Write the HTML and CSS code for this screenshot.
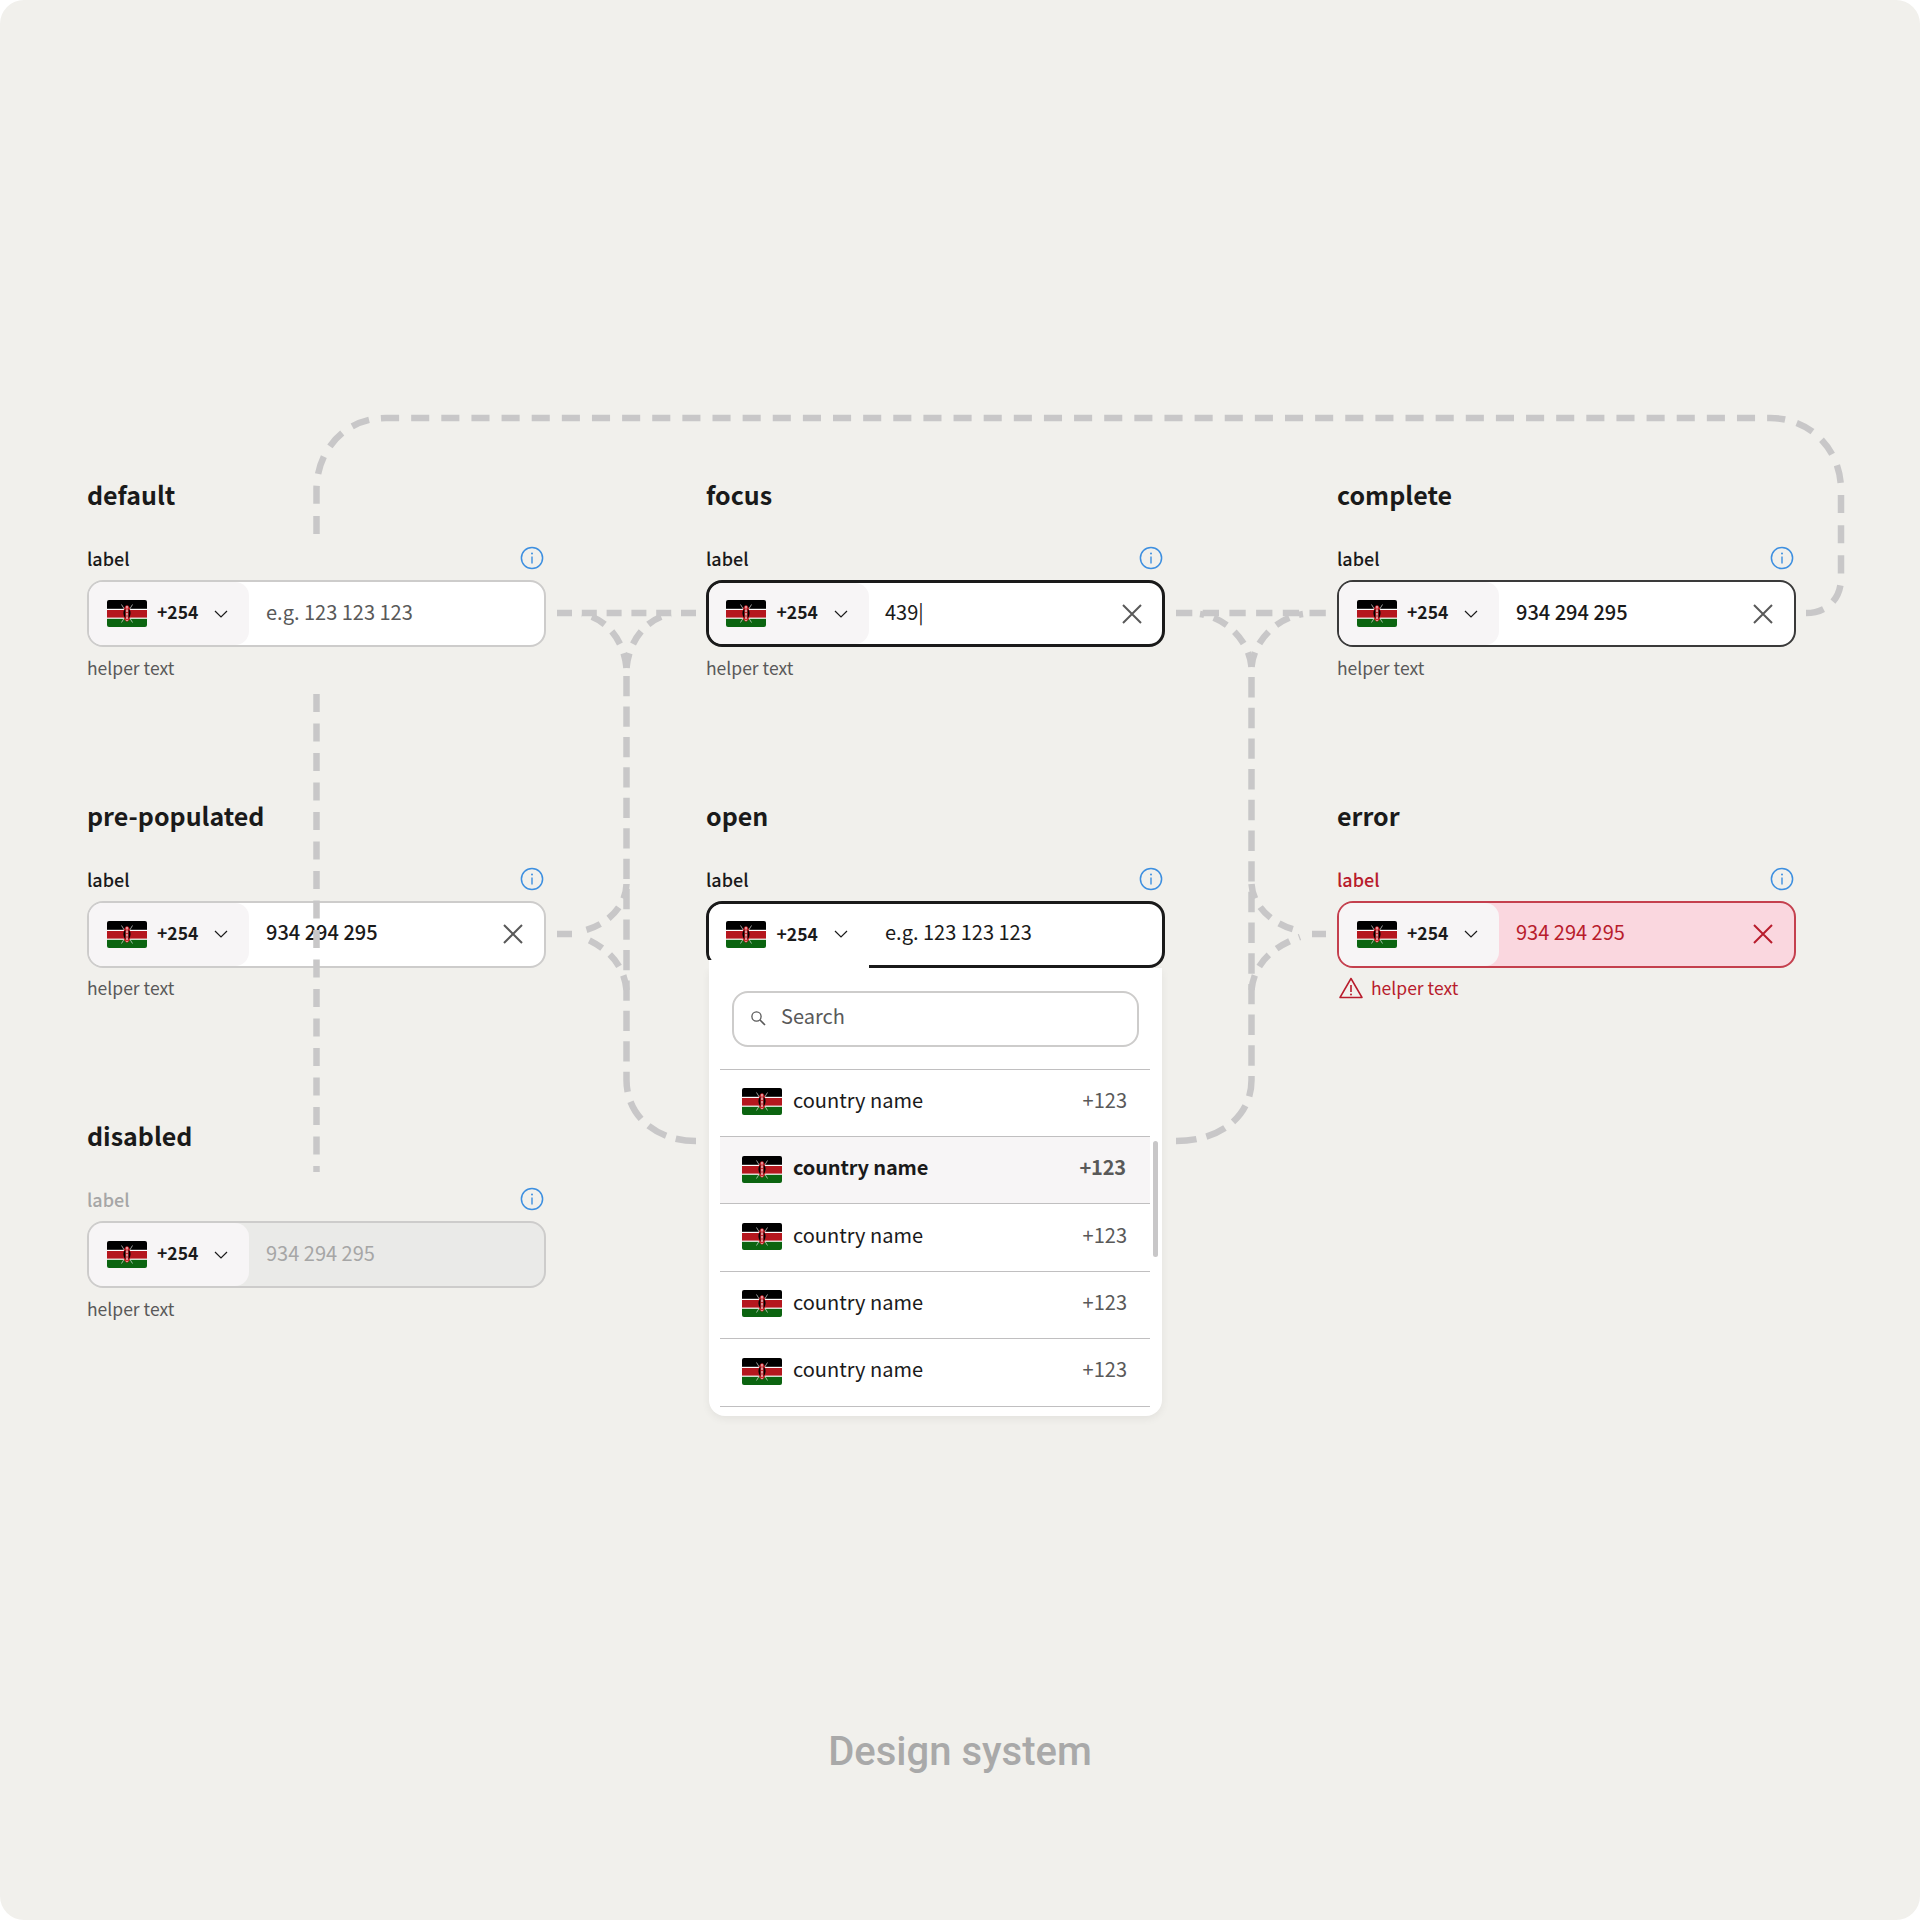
FILE: index.html
```html
<!DOCTYPE html>
<html lang="en">
<head>
    <meta charset="UTF-8">
    <meta name="viewport" content="width=device-width, initial-scale=1.0">
    <title>Phone input states</title>
    <link rel="stylesheet" href="styles.css">
</head>
<body>
    <svg class="defs" width="0" height="0">
        <symbol id="flag" viewBox="0 0 40 27">
            <clipPath id="flag-clip"><rect width="40" height="27" rx="2"/></clipPath>
            <g clip-path="url(#flag-clip)">
                <rect width="40" height="27" fill="#fff"/>
                <rect width="40" height="8.8" fill="#000"/>
                <rect y="10" width="40" height="7.6" fill="#b5171e"/>
                <rect y="18.8" width="40" height="8.2" fill="#0b6410"/>
            </g>
            <path d="M14.5 4.5 25.5 22.5M25.5 4.5 14.5 22.5" stroke="#ddd" stroke-width=".7"/>
            <ellipse cx="20" cy="13.5" rx="3.6" ry="8.2" fill="#c9252c"/>
            <path d="M16.4 13.5a3.6 6 0 0 1 2-5v10a3.6 6 0 0 1-2-5zM23.6 13.5a3.6 6 0 0 0-2-5v10a3.6 6 0 0 0 2-5z" fill="#000"/>
            <path d="M20 6v15" stroke="#fff" stroke-width="1" stroke-dasharray="2.5 1"/>
        </symbol>
        <symbol id="chevron" viewBox="0 0 14 8">
            <path d="M1 1l6 6 6-6" fill="none" stroke="currentColor" stroke-width="1.2"/>
        </symbol>
        <symbol id="info" viewBox="0 0 24 24">
            <circle cx="12" cy="12" r="10.6" fill="none" stroke="currentColor" stroke-width="1.5"/>
            <path d="M12 10.5v7" stroke="currentColor" stroke-width="1.4"/>
            <circle cx="12" cy="7.4" r="1" fill="currentColor"/>
        </symbol>
        <symbol id="clear" viewBox="0 0 20 20">
            <path d="M1 1l18 18M19 1 1 19" fill="none" stroke="currentColor" stroke-width="2"/>
        </symbol>
    </svg>

    <div class="canvas">
        <div class="states">
            <!-- first row -->
            <section class="state">
                <h2>default</h2>
                <div class="label-row"><span class="label">label</span><svg class="info"><use href="#info"/></svg></div>
                <div class="field">
                    <div class="trigger"><svg class="flag"><use href="#flag"/></svg><b class="code">+254</b><svg class="chevron"><use href="#chevron"/></svg></div>
                    <div class="value placeholder">e.g. 123 123 123</div>
                </div>
                <p class="helper">helper text</p>
            </section>

            <section class="state">
                <h2>focus</h2>
                <div class="label-row"><span class="label">label</span><svg class="info"><use href="#info"/></svg></div>
                <div class="field field-strong">
                    <div class="trigger"><svg class="flag"><use href="#flag"/></svg><b class="code">+254</b><svg class="chevron"><use href="#chevron"/></svg></div>
                    <div class="value placeholder">439|</div>
                    <svg class="clear"><use href="#clear"/></svg>
                </div>
                <p class="helper">helper text</p>
            </section>

            <section class="state">
                <h2>complete</h2>
                <div class="label-row"><span class="label">label</span><svg class="info"><use href="#info"/></svg></div>
                <div class="field field-complete">
                    <div class="trigger"><svg class="flag"><use href="#flag"/></svg><b class="code">+254</b><svg class="chevron"><use href="#chevron"/></svg></div>
                    <div class="value">934 294 295</div>
                    <svg class="clear"><use href="#clear"/></svg>
                </div>
                <p class="helper">helper text</p>
            </section>

            <!-- second row -->
            <section class="state">
                <h2>pre-populated</h2>
                <div class="label-row"><span class="label">label</span><svg class="info"><use href="#info"/></svg></div>
                <div class="field">
                    <div class="trigger"><svg class="flag"><use href="#flag"/></svg><b class="code">+254</b><svg class="chevron"><use href="#chevron"/></svg></div>
                    <div class="value">934 294 295</div>
                    <svg class="clear"><use href="#clear"/></svg>
                </div>
                <p class="helper">helper text</p>
            </section>

            <section class="state">
                <h2>open</h2>
                <div class="label-row"><span class="label">label</span><svg class="info"><use href="#info"/></svg></div>
                <div class="field field-strong field-open">
                    <div class="trigger"><svg class="flag"><use href="#flag"/></svg><b class="code">+254</b><svg class="chevron"><use href="#chevron"/></svg></div>
                    <div class="value placeholder">e.g. 123 123 123</div>
                    <div class="menu">
                        <div class="search">
                            <svg class="search-icon" viewBox="0 0 16 16"><circle cx="6.5" cy="6.5" r="4.6" fill="none" stroke="#595959" stroke-width="1.3"/><path d="M10 10l5 5" stroke="#595959" stroke-width="1.6"/></svg>
                            <span>Search</span>
                        </div>
                        <ul class="countries">
                            <li><svg class="flag"><use href="#flag"/></svg><span class="name">country name</span><span class="dial">+123</span></li>
                            <li class="active"><svg class="flag"><use href="#flag"/></svg><span class="name">country name</span><span class="dial">+123</span></li>
                            <li><svg class="flag"><use href="#flag"/></svg><span class="name">country name</span><span class="dial">+123</span></li>
                            <li><svg class="flag"><use href="#flag"/></svg><span class="name">country name</span><span class="dial">+123</span></li>
                            <li><svg class="flag"><use href="#flag"/></svg><span class="name">country name</span><span class="dial">+123</span></li>
                        </ul>
                        <div class="scrollbar"></div>
                    </div>
                </div>
            </section>

            <section class="state state-error">
                <h2>error</h2>
                <div class="label-row"><span class="label">label</span><svg class="info"><use href="#info"/></svg></div>
                <div class="field">
                    <div class="trigger"><svg class="flag"><use href="#flag"/></svg><b class="code">+254</b><svg class="chevron"><use href="#chevron"/></svg></div>
                    <div class="value">934 294 295</div>
                    <svg class="clear"><use href="#clear"/></svg>
                </div>
                <p class="helper">
                    <svg class="warn" viewBox="0 0 24 22"><path d="M12 1.5 1 20.5h22z" fill="none" stroke="#b81c2c" stroke-width="1.5" stroke-linejoin="round"/><path d="M12 8v7" stroke="#b81c2c" stroke-width="1.6"/><circle cx="12" cy="17.6" r="1" fill="#b81c2c"/></svg>
                    helper text
                </p>
            </section>

            <!-- third row -->
            <section class="state state-disabled">
                <h2>disabled</h2>
                <div class="label-row"><span class="label">label</span><svg class="info"><use href="#info"/></svg></div>
                <div class="field">
                    <div class="trigger"><svg class="flag"><use href="#flag"/></svg><b class="code">+254</b><svg class="chevron"><use href="#chevron"/></svg></div>
                    <div class="value">934 294 295</div>
                </div>
                <p class="helper">helper text</p>
            </section>
        </div>

        <p class="caption">Design system</p>

        <!-- connectors between the states -->
        <svg class="connectors" width="1920" height="1920" viewBox="0 0 1920 1920">
            <path class="loop" pathLength="1788" d="M316.5 534V490C316.5 450 345 418 386 418H1770C1811 418 1841 450 1841 490V578C1841 600 1826 613 1806 613"/>
            <path d="M316.5 694V1172"/>

            <path class="hop-a" d="M557 613H696"/>
            <path class="branch" d="M626.5 668C624 640 606 618 582 614"/>
            <path class="branch" d="M626.5 668C629 640 647 618 671 614"/>
            <path class="long" pathLength="500" d="M696 1141C655 1141 626.5 1115 626.5 1080V676"/>
            <path d="M557 934H572"/>
            <path class="branch" d="M626.5 884C626 908 605 926 582 931"/>
            <path class="branch" d="M626.5 990C624 962 604 946 582 937"/>

            <path class="hop-b" d="M1176 613H1326"/>
            <path class="branch" d="M1251.5 667C1249 640 1226 618 1200 614"/>
            <path class="branch" d="M1251.5 667C1254 640 1277 618 1303 614"/>
            <path class="long" pathLength="500" d="M1176 1141C1222 1141 1251.5 1115 1251.5 1080V677"/>
            <path d="M1326 934H1312"/>
            <path class="branch" d="M1251.5 884C1253 908 1275 926 1300 931"/>
            <path class="branch" d="M1251.5 990C1254 962 1275 946 1300 937"/>
        </svg>
    </div>
</body>
</html>
```

FILE: styles.css
```css
* {
    box-sizing: border-box;
}
body {
    margin: 0;
    background-color: #fff;
    font-family: "Noto Sans CJK SC", "Noto Sans", sans-serif;
    color: #1a1a1a;
}
.defs {
    position: absolute;
}
.canvas {
    position: relative;
    width: 1920px;
    height: 1920px;
    padding-top: 476px;
    background-color: #f1f0ec;
    border-radius: 24px;
    overflow: hidden;
}
.states {
    display: grid;
    grid-template-columns: 619px 631px 459px;
    grid-auto-rows: 320.6px;
    padding-left: 87px;
}
.state {
    width: 459px;
}
h2 {
    margin: 0 0 34px;
    font-size: 25px;
    line-height: 36px;
    font-weight: 700;
}
.label-row {
    display: flex;
    justify-content: space-between;
    align-items: center;
    height: 24px;
    margin-bottom: 10px;
    padding-right: 2px;
}
.label {
    font-size: 18px;
    font-weight: 500;
}
.info {
    width: 24px;
    height: 24px;
    color: #3d8fe0;
}
.field {
    position: relative;
    display: flex;
    align-items: center;
    height: 67px;
    background-color: #fff;
    border: 2px solid #cdcccb;
    border-radius: 16px;
}
.trigger {
    display: flex;
    align-items: center;
    align-self: stretch;
    flex: none;
    width: 160px;
    padding-left: 17.5px;
    background-color: #f7f5f6;
    border-radius: 14px;
}
.flag {
    flex: none;
    width: 40px;
    height: 27px;
}
.code {
    margin: 0 0 4px 10.5px;
    font-size: 17.5px;
    font-weight: 700;
}
.chevron {
    width: 14px;
    height: 8px;
    margin-left: 16px;
    color: #1a1a1a;
}
.value {
    flex: 1;
    padding-left: 17px;
    font-size: 20px;
    font-weight: 500;
    line-height: 28px;
    margin-top: -4px;
}
.placeholder {
    font-weight: 400;
    color: #595959;
}
.clear {
    flex: none;
    width: 20px;
    height: 20px;
    margin-right: 21px;
    color: #595959;
}
.helper {
    display: flex;
    align-items: center;
    height: 24px;
    margin: 8px 0 0;
    font-size: 17.5px;
    color: #595959;
}

/* focus and open */
.field-strong {
    border: 3px solid #1a1a1a;
}
.field-strong .trigger {
    padding-left: 17px;
}
.field-strong .value {
    padding-left: 16px;
}
.field-strong .clear {
    margin-right: 20px;
}
.field-strong .placeholder:not(:last-child) {
    color: #1a1a1a;
}
.field-complete {
    border-color: #3a3a3a;
}
.field-open .trigger {
    background-color: #fff;
}
.field-open .code {
    margin-bottom: 2px;
}
.field-open .placeholder {
    color: #595959;
}

/* error and disabled */
.state-error .label,
.state-error .helper,
.state-error .value,
.state-error .clear {
    color: #b81c2c;
}
.state-error .value {
    font-weight: 400;
}
.state-error .field {
    background-color: #fad7df;
    border-color: #c4404e;
}
.warn {
    width: 24px;
    height: 22px;
    margin: 0 8px 0 2px;
}
.state-disabled .label,
.state-disabled .value {
    color: #a6a6a6;
}
.state-disabled .value {
    font-weight: 400;
}
.state-disabled .field {
    background-color: #eaeae8;
}

/* country menu */
.menu {
    position: absolute;
    z-index: 2;
    top: calc(100% + 3px);
    left: 0;
    width: 453px;
    height: 448px;
    padding: 23px 12px 0 11px;
    background-color: #fff;
    border-radius: 0 0 16px 16px;
    box-shadow: 0 3px 8px rgba(0, 0, 0, 0.06);
}
.menu::before {
    content: "";
    position: absolute;
    top: -8px;
    left: -3px;
    width: 160px;
    height: 8px;
    background-color: #fff;
    border-left: 3px solid #f1f0ec;
}
.search {
    display: flex;
    align-items: center;
    height: 56px;
    margin: 0 11px 0 12px;
    padding-left: 16px;
    border: 2px solid #cdcccb;
    border-radius: 16px;
    font-size: 20px;
    color: #595959;
}
.search span {
    margin-bottom: 6px;
}
.search-icon {
    width: 16px;
    height: 16px;
    margin: 0 15px 2px 0;
}
.countries {
    margin: 22px 0 0;
    padding: 0;
    list-style: none;
    border-bottom: 1px solid #c0bfc0;
}
.countries li {
    display: flex;
    align-items: center;
    height: 67.4px;
    padding: 0 23px 2px 22px;
    border-top: 1px solid #c0bfc0;
    font-size: 20px;
}
.name {
    flex: 1;
    margin: 0 0 5px 11px;
}
.dial {
    margin-bottom: 5px;
    color: #595959;
}
.countries .active {
    padding-right: 24px;
    background-color: #f7f5f6;
    font-weight: 700;
    letter-spacing: -0.15px;
}
.scrollbar {
    position: absolute;
    top: 173px;
    right: 4px;
    width: 5px;
    height: 116px;
    background-color: #c8c7c8;
    border-radius: 3px;
}

.caption {
    margin: 290px 0 0;
    font-family: Roboto, sans-serif;
    font-size: 40px;
    font-weight: 500;
    line-height: 48px;
    text-align: center;
    color: #a9a9a9;
}
.connectors {
    position: absolute;
    top: 0;
    left: 0;
    z-index: 3;
    pointer-events: none;
}
.connectors path {
    fill: none;
    stroke: #c8c7c8;
    stroke-width: 6.5;
    stroke-dasharray: 18 11.5;
}
.connectors .loop {
    stroke-dasharray: 18 12;
}
.connectors .hop-a {
    stroke-dasharray: 15 9.8;
}
.connectors .hop-b {
    stroke-dasharray: 16.3 10.4;
}
.connectors .branch {
    stroke-dasharray: 15 10;
}
.connectors .long {
    stroke-dasharray: 20 10;
}
```
